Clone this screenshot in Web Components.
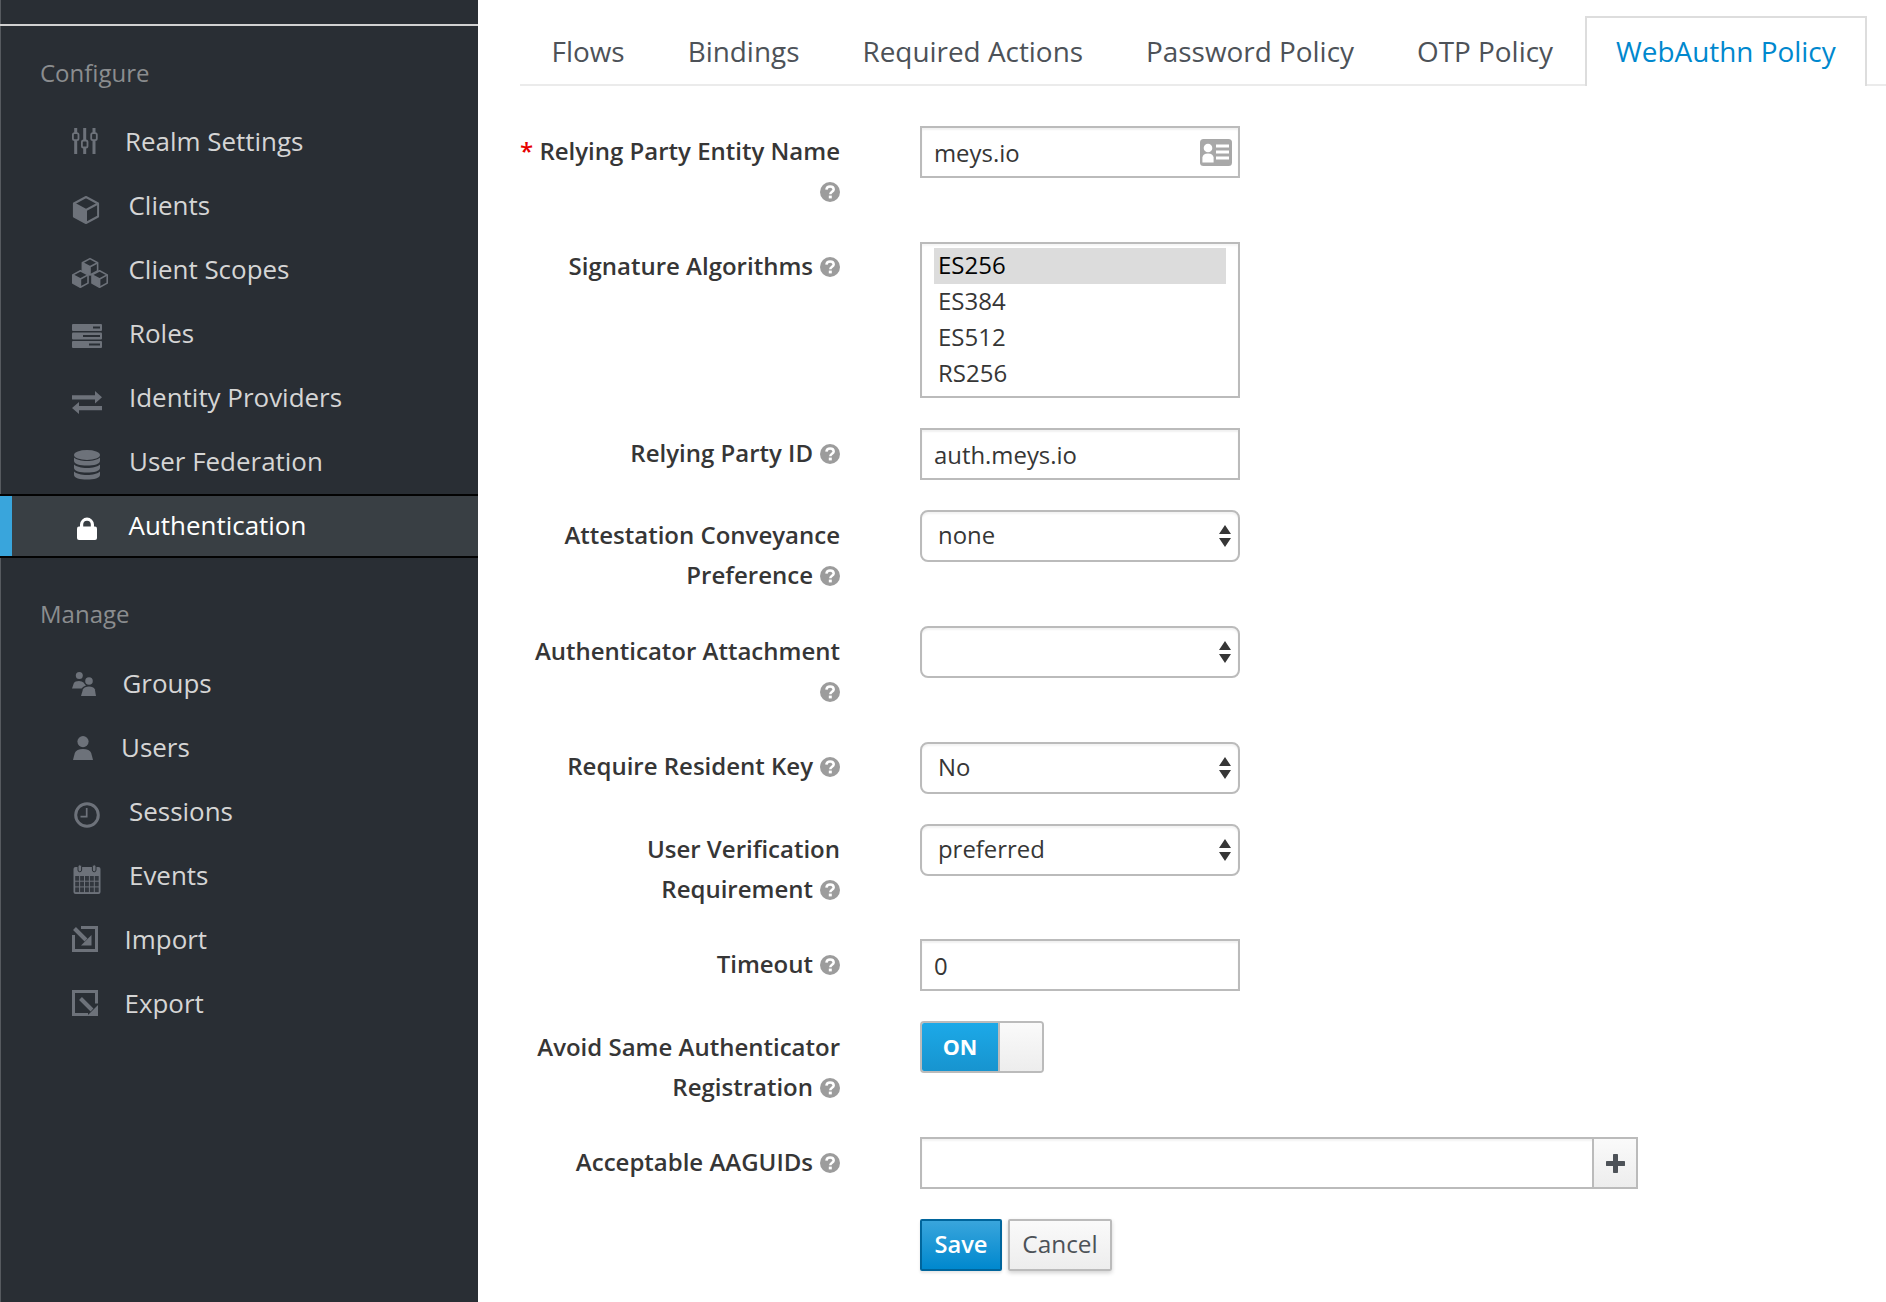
<!doctype html>
<html><head><meta charset="utf-8"><title>Keycloak WebAuthn Policy</title>
<style>
html,body{margin:0;padding:0;background:#fff}
body{font-family:"Open Sans",sans-serif;height:1302px;overflow:hidden}
</style></head>
<body>
<kc-app>
  <kc-sidebar slot="side">
    <kc-nav-head>Configure</kc-nav-head>
    <kc-nav-item icon="sliders" w="26" h="26" dy="-1" gap="27">Realm Settings</kc-nav-item>
    <kc-nav-item icon="cube" w="28" h="28" dy="4" gap="28.5">Clients</kc-nav-item>
    <kc-nav-item icon="cubes" w="36" h="30" dy="3" gap="20.5">Client Scopes</kc-nav-item>
    <kc-nav-item icon="roles" w="30" h="24" dy="2" gap="27">Roles</kc-nav-item>
    <kc-nav-item icon="arrows" w="30" h="23" dy="4.5" gap="27">Identity Providers</kc-nav-item>
    <kc-nav-item icon="db" w="26" h="30" dy="3" gap="29" style="--ml:2px">User Federation</kc-nav-item>
    <kc-nav-item icon="lock" w="20" h="23" dy="2.5" gap="31.5" active style="--ml:5px">Authentication</kc-nav-item>
    <kc-nav-head second>Manage</kc-nav-head>
    <kc-nav-item icon="groups" w="24" h="24" dy="0" gap="26.5">Groups</kc-nav-item>
    <kc-nav-item icon="user" w="20" h="24" dy="0" gap="28" style="--ml:1px">Users</kc-nav-item>
    <kc-nav-item icon="clock" w="26" h="26" dy="3" gap="29" style="--ml:2px">Sessions</kc-nav-item>
    <kc-nav-item icon="calendar" w="28" h="30" dy="3" gap="28" style="--ml:1px">Events</kc-nav-item>
    <kc-nav-item icon="import" w="26" h="26" dy="-1" gap="26.5">Import</kc-nav-item>
    <kc-nav-item icon="export" w="26" h="26" dy="-1" gap="26.5">Export</kc-nav-item>
  </kc-sidebar>
  <kc-tabs>
    <kc-tab>Flows</kc-tab><kc-tab>Bindings</kc-tab><kc-tab>Required Actions</kc-tab><kc-tab>Password Policy</kc-tab><kc-tab>OTP Policy</kc-tab><kc-tab active>WebAuthn Policy</kc-tab>
  </kc-tabs>
  <kc-form>
    <kc-row tall><kc-label required help>Relying Party Entity Name</kc-label><kc-input value="meys.io" card></kc-input></kc-row>
    <kc-row><kc-label help>Signature Algorithms</kc-label>
      <kc-listbox><kc-option selected>ES256</kc-option><kc-option>ES384</kc-option><kc-option>ES512</kc-option><kc-option>RS256</kc-option></kc-listbox></kc-row>
    <kc-row><kc-label help>Relying Party ID</kc-label><kc-input value="auth.meys.io"></kc-input></kc-row>
    <kc-row tall><kc-label help>Attestation Conveyance Preference</kc-label><kc-select>none</kc-select></kc-row>
    <kc-row tall><kc-label help>Authenticator Attachment</kc-label><kc-select></kc-select></kc-row>
    <kc-row><kc-label help>Require Resident Key</kc-label><kc-select>No</kc-select></kc-row>
    <kc-row tall><kc-label help>User Verification Requirement</kc-label><kc-select>preferred</kc-select></kc-row>
    <kc-row><kc-label help>Timeout</kc-label><kc-input value="0"></kc-input></kc-row>
    <kc-row tall><kc-label help>Avoid Same Authenticator Registration</kc-label><kc-switch>ON</kc-switch></kc-row>
    <kc-row><kc-label help>Acceptable AAGUIDs</kc-label><kc-add-input></kc-add-input></kc-row>
    <kc-row><kc-label></kc-label><kc-actions><kc-button primary>Save</kc-button><kc-button>Cancel</kc-button></kc-actions></kc-row>
  </kc-form>
</kc-app>
<script>
const C='#6d727a',D='#292e34';
function hex(cx,cy,r,sw){
  const h=r*0.5,x=r*0.93;
  return `<path d="M${cx} ${cy-r}L${cx+x} ${cy-h}V${cy+h}L${cx} ${cy+r}L${cx-x} ${cy+h}V${cy-h}Z" fill="${D}" stroke="${C}" stroke-width="${sw}" stroke-linejoin="round"/>
  <path d="M${cx-x} ${cy-h}L${cx} ${cy}V${cy+r}L${cx-x} ${cy+h}Z" fill="${C}"/>
  <path d="M${cx-x} ${cy-h}L${cx} ${cy}L${cx+x} ${cy-h}M${cx} ${cy}V${cy+r}" fill="none" stroke="${C}" stroke-width="${sw}"/>`;
}
function band(y){return `<path d="M0 ${y}C4 ${y+4.6} 22 ${y+4.6} 26 ${y}V${y+3.2}C26 ${y+6.6} 20 ${y+8} 13 ${y+8}C6 ${y+8} 0 ${y+6.6} 0 ${y+3.2}Z" fill="${C}"/>`}
function cal(){
  let s=`<rect x="0.5" y="3" width="27" height="27" rx="2" fill="${C}"/>`;
  for(let r=0;r<3;r++)for(let c=0;c<5;c++)s+=`<rect x="${2.2+c*4.9}" y="${12+r*5.7}" width="3.9" height="4.7" fill="#32373e"/>`;
  s+=`<rect x="5" y="0.8" width="3.6" height="7" rx="1.8" fill="${C}" stroke="${D}" stroke-width="1"/><rect x="19.4" y="0.8" width="3.6" height="7" rx="1.8" fill="${C}" stroke="${D}" stroke-width="1"/>`;
  return s;
}
const ICONS={
 sliders:`<path fill="${C}" d="M2.2 0h3v26h-3zM11.2 0h3v26h-3zM20.5 0h3v26h-3z"/>
   <g fill="${D}" stroke="${C}" stroke-width="1.8"><rect x="0.9" y="5.2" width="5.6" height="7" rx="1.6"/><rect x="9.9" y="12.5" width="5.6" height="7" rx="1.6"/><rect x="19.2" y="5.2" width="5.6" height="7" rx="1.6"/></g>`,
 cube:hex(14,14,13,2),
 cubes:hex(18,8.8,8.2,1.6)+hex(8.4,21,8.2,1.6)+hex(27.6,21,8.2,1.6),
 roles:`<g fill="${C}"><rect width="30" height="7" rx="1"/><rect y="8.5" width="30" height="7" rx="1"/><rect y="17" width="30" height="7" rx="1"/></g>
   <g fill="${D}"><rect x="21" y="2.5" width="7" height="2"/><rect x="11" y="11" width="17" height="2"/><rect x="17" y="19.5" width="11" height="2"/></g>`,
 arrows:`<path fill="${C}" d="M0 4.3H23V0L30 6.3L23 12.5V8.4H0ZM30 15V19.2H7V23L0 17L7 11V15Z"/>`,
 db:`<ellipse cx="13" cy="5" rx="13" ry="5" fill="${C}"/>`+band(7.5)+band(14.5)+band(21.5),
 lock:`<path d="M4.6 11V7.6a5.4 5.4 0 0 1 10.8 0V11" fill="none" stroke="#fff" stroke-width="3.2"/><rect y="9.5" width="20" height="13.5" rx="2" fill="#fff"/>`,
 groups:`<g fill="${C}"><circle cx="7.3" cy="3.6" r="3.5"/><circle cx="17" cy="9" r="3.8"/>
   <path d="M0 16.5L1.8 11.2Q3 9 7 9Q10 9 11.5 10.6Q12.5 12 14 13.4Q11 14.2 9.5 16.5Z"/>
   <path d="M9 24L11 17.2Q12.5 14.4 17 14.4Q21.5 14.4 22.8 17.2L24 24Z"/></g>`,
 user:`<g fill="${C}"><circle cx="10" cy="5.6" r="5.6"/><path d="M0 24L1.8 17Q3.5 13 10 13Q16.5 13 18.2 17L20 24Z"/></g>`,
 clock:`<circle cx="13" cy="13" r="11.3" fill="none" stroke="${C}" stroke-width="3"/><path d="M12.7 6V14.7H6.5" fill="none" stroke="${C}" stroke-width="1.7"/>`,
 calendar:cal(),
 import:`<path d="M9 1.5H24.5V24.5H1.5V9" fill="none" stroke="${C}" stroke-width="3"/><path d="M2.5 2.5L14 14" stroke="${C}" stroke-width="4"/><path d="M19.5 9V19.5H9Z" fill="${C}"/>`,
 export:`<path d="M16 24.5H1.5V1.5H24.5V13.5" fill="none" stroke="${C}" stroke-width="3"/><path d="M8.5 8.5L20 20" stroke="${C}" stroke-width="4"/><path d="M26 15V26H15Z" fill="${C}"/>`
};
function def(name,css,html){
  customElements.define(name,class extends HTMLElement{
    constructor(){super();const r=this.attachShadow({mode:'open'});
      r.innerHTML=`<style>${css}</style>`+(typeof html==='function'?html(this):html);}
  });
}
def('kc-app',`:host{display:flex;align-items:stretch;height:1302px;color:#363636}
  .main{flex:1;min-width:0;padding-left:42px}`,
  `<slot name="side"></slot><div class="main"><slot></slot></div>`);
def('kc-sidebar',`:host{display:block;box-sizing:border-box;width:478px;flex:none;height:1302px;
   background:linear-gradient(#565a5f,#565a5f) left/1px 100% no-repeat,#292e34}
   .top{height:24px;border-bottom:2px solid #d1d1d1}`,`<div class="top"></div><slot></slot>`);
def('kc-nav-head',`:host{display:block;font-size:24px;line-height:40px;color:#8b8d8f;padding:27px 0 17px 40px}
  :host([second]){padding-top:36px;padding-bottom:18px}`,`<slot></slot>`);
def('kc-nav-item',`:host{display:flex;align-items:center;box-sizing:border-box;height:64px;padding-left:72px;
    font-size:25.95px;line-height:40px;color:#d5d5d5}
  :host([active]){color:#fff;border-top:2px solid #030303;border-bottom:2px solid #030303;
    background:linear-gradient(#39a5dc,#39a5dc) left/12px 100% no-repeat,#393f44}
  svg{display:block;flex:none;margin-left:var(--ml,0);overflow:visible}
  span{padding-bottom:1.5px}`,
  el=>{const w=+el.getAttribute('w'),h=+el.getAttribute('h'),dy=+el.getAttribute('dy'),gap=el.getAttribute('gap');
    const mt=dy>=0?`margin-top:${dy*2}px`:`margin-bottom:${-dy*2}px`;
    return `<svg width="${w}" height="${h}" viewBox="0 0 ${w} ${h}" style="${mt};margin-right:${gap}px" aria-hidden="true">${ICONS[el.getAttribute('icon')]}</svg><span><slot></slot></span>`});
def('kc-tabs',`:host{display:flex;box-sizing:border-box;height:86px;padding-top:16px;border-bottom:2px solid #ebebeb}`,`<slot></slot>`);
def('kc-tab',`:host{display:block;box-sizing:border-box;height:70px;padding:0 31.5px;font-size:27.9px;line-height:70px;color:#4d5258;white-space:nowrap}
  :host([active]){color:#0088ce;background:#fff;border:2px solid #ddd;border-bottom:0;padding:0 29.5px;line-height:66px}`,`<slot></slot>`);
def('kc-form',`:host{display:flex;flex-direction:column;gap:30.4px;padding-top:40px}`,`<slot></slot>`);
def('kc-row',`:host{display:grid;grid-template-columns:320px 1fr;column-gap:80px;align-items:start}
  :host([tall]){min-height:85.2px}`,`<slot></slot>`);
const HELP=`<svg class="h" width="20" height="20" viewBox="0 0 20 20" aria-hidden="true"><circle cx="10" cy="10" r="10" fill="#9c9c9c"/><path d="M6.4 7.6C6.6 5.4 8.2 4.4 10.1 4.4C12.2 4.4 13.7 5.6 13.7 7.4C13.7 9.7 10.3 9.8 10.3 12.2" fill="none" stroke="#fff" stroke-width="2.5"/><rect x="8.8" y="13.6" width="3" height="2.8" fill="#fff"/></svg>`;
def('kc-label',`:host{display:block;box-sizing:border-box;padding-top:4.8px;text-align:right;font-size:24px;line-height:40px;font-weight:600;color:#363636}
  .r{color:#e60000}.h{display:inline-block;vertical-align:-2px;margin-left:7px}`,
  el=>(el.hasAttribute('required')?'<span class="r">*</span> ':'')+'<slot></slot>'+(el.hasAttribute('help')?HELP:''));
const FIELD=`box-sizing:border-box;height:52px;border:2px solid #bbb;background:#fff;font-size:23.9px;color:#363636;`;
def('kc-input',`:host{display:flex;align-items:center;justify-content:space-between;${FIELD}width:320px;padding:1px 6px 0 12px;
    box-shadow:inset 0 2px 2px rgba(3,3,3,.06)}
  svg{display:block;margin-top:-1px}`,
  el=>`<span>${el.getAttribute('value')||''}</span>`+(el.hasAttribute('card')?
   `<svg width="32" height="27" viewBox="0 0 32 27" aria-hidden="true"><rect width="32" height="27" rx="3.5" fill="#a8a8a8"/><g fill="#fff"><circle cx="8" cy="9" r="4.3"/><path d="M2.4 23.5V18.6Q3 14.6 8 14.6Q13 14.6 13.6 18.6V23.5Z"/><rect x="16" y="5.5" width="13" height="3"/><rect x="16" y="11.5" width="13" height="3"/><rect x="16" y="17.5" width="13" height="3"/></g></svg>`:''));
def('kc-listbox',`:host{display:block;${FIELD}height:156px;width:320px;padding:4px 12px;overflow:hidden;box-shadow:inset 0 2px 2px rgba(3,3,3,.04)}`,`<slot></slot>`);
def('kc-option',`:host{display:block;height:36px;line-height:34px;padding:0 4px;font-size:24px;color:#363636}
  :host([selected]){background:#dcdcdc;color:#030303}`,`<slot></slot>`);
def('kc-select',`:host{display:flex;align-items:center;justify-content:space-between;${FIELD}width:320px;border-radius:8px;padding:0 7px 0 16px;
    box-shadow:inset 0 2px 2px rgba(3,3,3,.05)}
  span{min-height:1px;padding-bottom:3px}svg{display:block;flex:none}`,
  `<span><slot></slot></span><svg width="12" height="22" viewBox="0 0 12 22" aria-hidden="true"><path d="M6 0L12 9H0ZM6 22L0 13H12Z" fill="#363636"/></svg>`);
def('kc-switch',`:host{display:flex;box-sizing:border-box;width:124px;height:52px;border:2px solid #bbb;border-radius:4px;overflow:hidden;font-size:21.5px;font-weight:700;margin-top:-1px}
  .on{width:76px;display:flex;align-items:center;justify-content:center;color:#fff;background:linear-gradient(#1ca9e8,#1794cf)}
  .k{flex:1;border-left:2px solid #bbb;background:linear-gradient(#fafafa,#ededed)}`,
  `<div class="on"><slot></slot></div><div class="k"></div>`);
def('kc-add-input',`:host{display:flex;width:718px;height:52px;box-sizing:border-box;border:2px solid #bbb;background:#fff;box-shadow:inset 0 2px 2px rgba(3,3,3,.05)}
  .i{flex:1}.b{width:44px;flex:none;border-left:2px solid #bbb;display:flex;align-items:center;justify-content:center;background:linear-gradient(#fafafa,#ededed);box-sizing:border-box}
  svg{display:block}`,
  `<div class="i"></div><div class="b"><svg width="19" height="19" viewBox="0 0 19 19" aria-hidden="true"><path d="M9.5 1.5V17.5M1.5 9.5H17.5" stroke="#4d5258" stroke-width="5" stroke-linecap="round"/></svg></div>`);
def('kc-actions',`:host{display:flex;gap:6px;margin-top:-1px}`,`<slot></slot>`);
def('kc-button',`:host{display:flex;align-items:center;justify-content:center;box-sizing:border-box;height:52px;width:104px;padding-bottom:2px;
    border:2px solid #bbb;border-radius:2px;font-size:24.4px;color:#4d5258;background:linear-gradient(#fafafa,#ededed);box-shadow:0 2px 4px rgba(3,3,3,.18)}
  :host([primary]){width:82px;font-size:23.7px;font-weight:600;color:#fff;border-color:#00659c;background:linear-gradient(#39a5dc,#0088ce);box-shadow:0 2px 3px rgba(3,3,3,.1)}`,`<slot></slot>`);
</script>
</body></html>
